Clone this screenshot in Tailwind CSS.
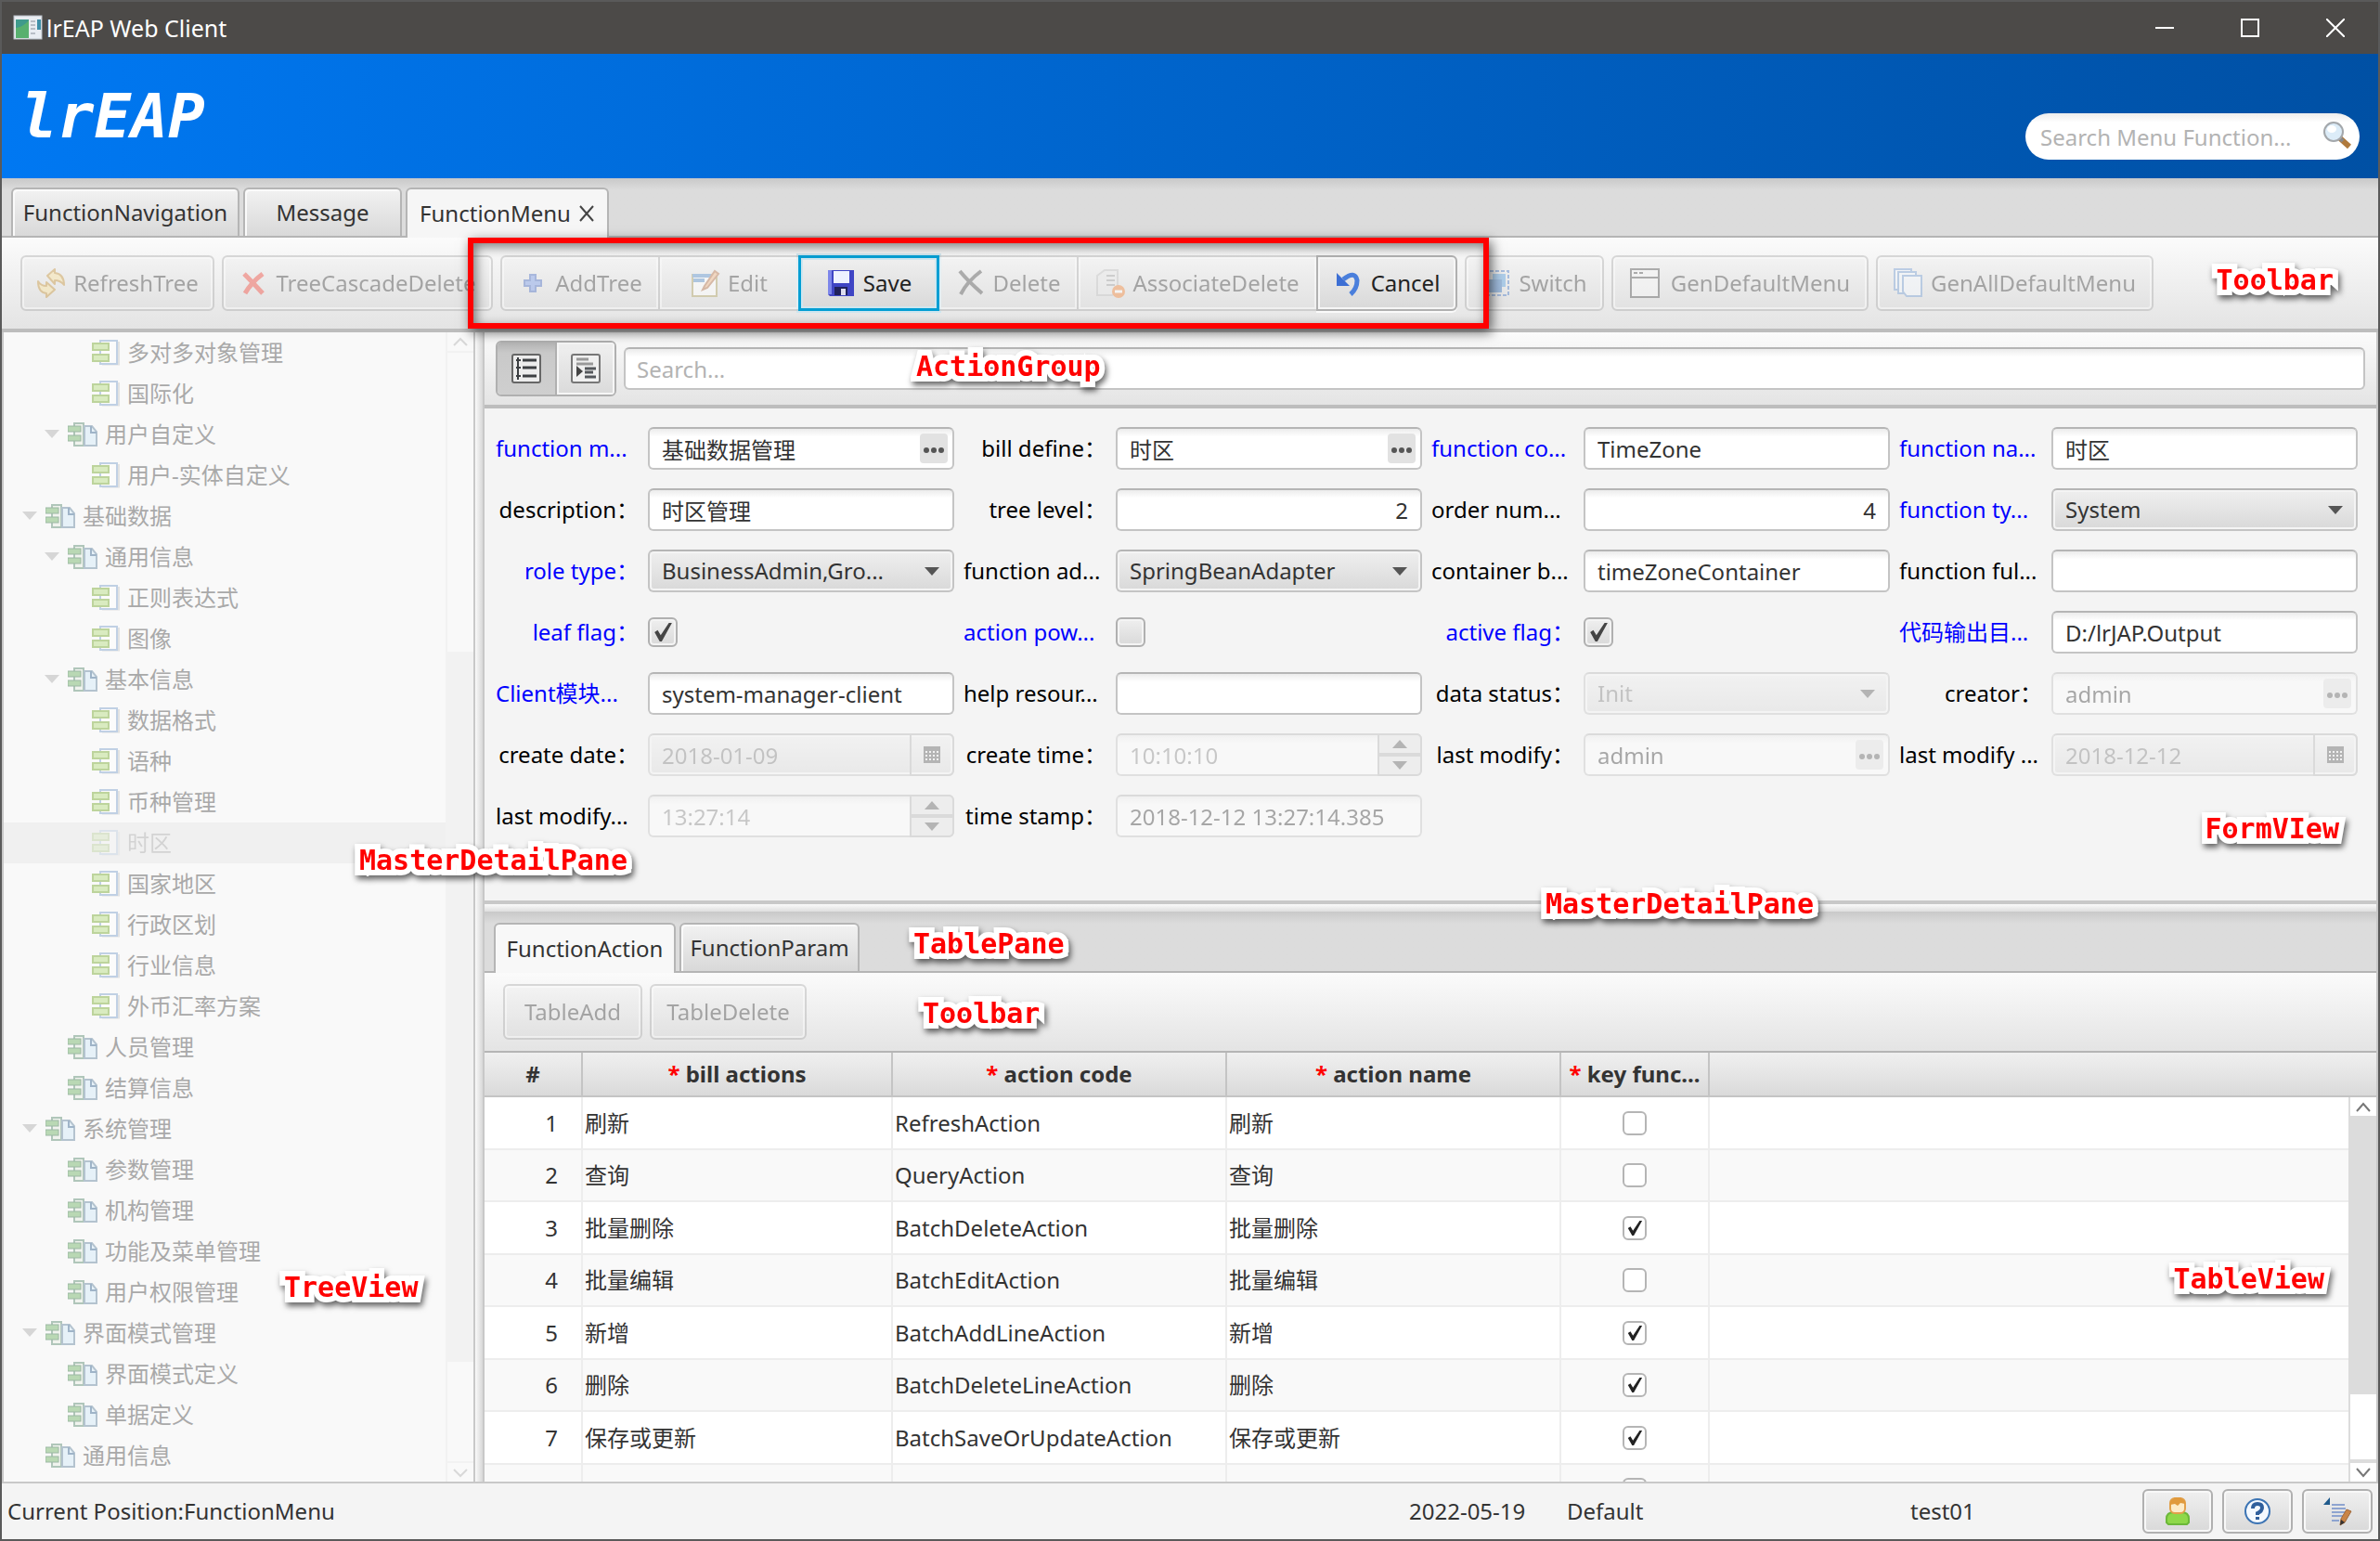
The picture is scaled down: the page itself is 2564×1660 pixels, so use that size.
<!DOCTYPE html>
<html lang="zh">
  <head>
    <meta charset="UTF-8" />
    <meta name="viewport" content="width=device-width, initial-scale=1.0" />
    <title>lrEAP Web Client</title>
    <script src="https://cdn.jsdelivr.net/npm/@tailwindcss/browser@4"></script>
  </head>
  <body
    class="h-screen flex flex-col overflow-hidden border-2 border-[#5a5a5a] bg-[#f4f4f4] text-[#333] text-[24px] leading-8 font-['Noto_Sans','Noto_Sans_CJK_SC',sans-serif]"
  >
    <!-- Shared icons -->
    <svg class="hidden">
      <symbol id="i-leaf" viewBox="0 0 30 30">
        <path d="M11 27h18V3" fill="none" stroke="#e2e2e2" stroke-width="3" />
        <rect x="9" y="2" width="18" height="25" fill="#fbfbfb" stroke="#c0d0e4" stroke-width="2" />
        <rect x="1" y="5" width="17" height="7" fill="#d9ebc0" stroke="#bdd49c" stroke-width="2" />
        <rect x="1" y="17" width="17" height="7" fill="#d9ebc0" stroke="#bdd49c" stroke-width="2" />
      </symbol>
      <symbol id="i-folder" viewBox="0 0 32 28">
        <rect x="7" y="2" width="10" height="24" fill="#f0f3ee" stroke="#b0c6ba" stroke-width="2" />
        <rect x="0" y="5" width="14" height="6" fill="#b9d8b4" stroke="#9cb8a4" />
        <rect x="0" y="15" width="14" height="6" fill="#b9d8b4" stroke="#9cb8a4" />
        <path d="M18 5h8l5 6v15H18z" fill="#e6f1f8" stroke="#b4c3cf" stroke-width="2" />
        <path d="M25 5v7h6" fill="none" stroke="#9fb4c8" stroke-width="2" />
      </symbol>
      <symbol id="i-check" viewBox="0 0 20 20">
        <path d="M2 10l3-2 3 5 8-12h3L9 19H7z" fill="currentColor" />
      </symbol>
      <symbol id="i-down" viewBox="0 0 16 10">
        <path d="M0 0h16L8 9z" fill="currentColor" />
      </symbol>
      <symbol id="i-calendar" viewBox="0 0 20 20">
        <path d="M1 1h18v18H1z" fill="#555" />
        <path d="M3 7h14M3 11h14M3 15h14" stroke="#eee" stroke-width="2" stroke-dasharray="2 2" />
      </symbol>
    </svg>

    <!-- Title bar -->
    <header class="h-14 shrink-0 flex items-center bg-[#4c4a48] text-white text-[25px] pl-3">
      <svg class="w-8 h-7 mr-1" viewBox="0 0 32 28">
        <rect x="1" y="1" width="30" height="25" fill="#e9edf2" stroke="#b9c0c8" />
        <rect x="3" y="5" width="14" height="20" fill="#3f9a8c" />
        <path d="M3 25V14q8-1 14-8v19z" fill="#58b06f" />
        <path d="M19 7h5M19 11h5M19 15h5M19 20h5" stroke="#b8bec6" stroke-width="2" />
        <rect x="26" y="5" width="4" height="11" fill="#3f8fa8" />
      </svg>
      <span class="flex-1">lrEAP Web Client</span>
      <button class="w-[92px] h-full flex items-center justify-center" aria-label="Minimize">
        <span class="w-5 h-[2px] bg-white"></span>
      </button>
      <button class="w-[92px] h-full flex items-center justify-center" aria-label="Maximize">
        <span class="w-5 h-5 border-2 border-white"></span>
      </button>
      <button class="w-[92px] h-full flex items-center justify-center" aria-label="Close">
        <svg class="w-5 h-5" viewBox="0 0 20 20"><path d="M0 0l20 20M20 0L0 20" stroke="#fff" stroke-width="2" /></svg>
      </button>
    </header>

    <!-- Banner -->
    <div class="h-[134px] shrink-0 flex items-end justify-between pl-5 pr-5 pb-5 bg-linear-to-r from-[#0078f2] to-[#0050a4]">
      <h1 class="text-white text-[66px] leading-[92px] italic font-bold font-['DejaVu_Sans_Mono',monospace]">lrEAP</h1>
      <div class="relative w-[360px]">
        <input
          type="text"
          aria-label="Search menu function"
          placeholder="Search Menu Function..."
          class="block w-full h-[50px] rounded-full bg-linear-to-b from-[#ececec] to-white to-20% pl-4 pr-14 placeholder:text-[#b3b3b3] outline-none"
        />
        <svg class="absolute right-2 top-2 w-8 h-8" viewBox="0 0 32 32">
          <path d="M19 19l10 9" stroke="#b07a3c" stroke-width="6" />
          <path d="M18 18l4 4" stroke="#888" stroke-width="4" />
          <circle cx="12" cy="12" r="10" fill="#dcecf8" stroke="#a3a7ab" stroke-width="2" />
          <ellipse cx="10" cy="9" rx="5" ry="4" fill="#fff" />
        </svg>
      </div>
    </div>

    <!-- Main tabs -->
    <nav class="h-16 shrink-0 flex items-end gap-1 pl-[10px] border-b-2 border-[#b5b5b5] bg-linear-to-b from-[#c9c9c9] via-[#dcdcdc] via-20% to-[#dcdcdc]">
      <button class="w-[246px] h-[52px] rounded-t-md border-2 border-b-0 border-[#b5b5b5] bg-linear-to-b from-[#f2f2f2] to-[#d9d9d9] shadow-[inset_2px_2px_0_#fafafa]">FunctionNavigation</button>
      <button class="w-[171px] h-[52px] rounded-t-md border-2 border-b-0 border-[#b5b5b5] bg-linear-to-b from-[#f2f2f2] to-[#d9d9d9] shadow-[inset_2px_2px_0_#fafafa]">Message</button>
      <button class="w-[219px] h-[54px] -mb-[2px] rounded-t-md border-2 border-b-0 border-[#b5b5b5] bg-[#f6f6f6] flex items-center justify-center gap-2">
        FunctionMenu
        <svg class="w-[18px] h-[18px]" viewBox="0 0 18 18"><path d="M2 1l14 16M16 1L2 17" stroke="#444" stroke-width="2" /></svg>
      </button>
    </nav>

    <!-- Toolbar -->
    <div class="relative h-[102px] shrink-0 flex items-center gap-2 pl-5 border-b-4 border-[#bdbdbd] bg-linear-to-b from-[#fbfbfb] to-[#e4e4e4]">
      <button disabled class="opacity-40 w-[209px] h-[60px] rounded-md border-2 border-[#a8a8a8] bg-linear-to-b from-[#efefef] to-[#d9d9d9] shadow-[inset_0_0_0_2px_#fafafa] flex items-center justify-center gap-2">
        <svg class="w-8 h-8" viewBox="0 0 32 32" fill="#f7dd92" stroke="#c08a2a" stroke-width="2" stroke-linejoin="round">
          <path d="M12 8l8-7v4q10 1 10 13-4-5-10-5v4z" />
          <path d="M20 23l-9 8v-4Q2 26 2 14q3 5 9 5v-4z" />
        </svg>
        RefreshTree
      </button>
      <button disabled class="opacity-40 w-[292px] h-[60px] rounded-md border-2 border-[#a8a8a8] bg-linear-to-b from-[#efefef] to-[#d9d9d9] shadow-[inset_0_0_0_2px_#fafafa] flex items-center justify-center gap-2">
        <svg class="w-8 h-8" viewBox="0 0 32 32"><path d="M6 6q8 8 20 21M26 6Q14 15 7 27" fill="none" stroke="#ee3a2c" stroke-width="5" /></svg>
        TreeCascadeDelete
      </button>
      <div class="relative flex w-[1031px] h-[60px]">
        <button disabled class="opacity-40 w-[172px] rounded-l-md border-2 border-[#a8a8a8] bg-linear-to-b from-[#efefef] to-[#d9d9d9] shadow-[inset_0_0_0_2px_#fafafa] flex items-center justify-center gap-2">
          <svg class="w-8 h-8" viewBox="0 0 32 32"><path d="M13 7h6v6h6v6h-6v6h-6v-6H7v-6h6z" fill="#6e92e6" stroke="#3d62bd" stroke-width="2" /></svg>
          AddTree
        </button>
        <button disabled class="opacity-40 w-[149px] border-y-2 border-[#a8a8a8] bg-linear-to-b from-[#efefef] to-[#d9d9d9] shadow-[inset_0_0_0_2px_#fafafa] flex items-center justify-center gap-2">
          <svg class="w-8 h-8" viewBox="0 0 32 32">
            <rect x="2" y="7" width="26" height="23" fill="#fff" stroke="#a99a55" stroke-width="2" />
            <path d="M2 8h20M3 13h12" stroke="#4d88c8" stroke-width="4" />
            <path d="M15 19L26 3l4 3-12 15-5 2z" fill="#f0b07a" stroke="#b0673a" stroke-width="2" />
          </svg>
          Edit
        </button>
        <button class="w-[152px] border-[3px] border-[#039ed3] bg-linear-to-b from-[#efefef] to-[#d9d9d9] shadow-[0_0_0_2px_#cfe6ef,inset_0_0_0_2px_#cfe6ef] flex items-center justify-center gap-2 text-[#222]">
          <svg class="w-8 h-8" viewBox="0 0 32 32">
            <path d="M2 2h28v28H4l-2-2z" fill="#3f45c4" />
            <path d="M2 2h4v26H2z" fill="#7d86ea" />
            <rect x="8" y="3" width="17" height="13" fill="#eef2ff" />
            <rect x="9" y="20" width="14" height="9" fill="#20225c" />
            <rect x="16" y="22" width="5" height="7" fill="#dde" />
          </svg>
          Save
        </button>
        <button disabled class="opacity-40 w-[150px] border-y-2 border-r-2 border-[#a8a8a8] bg-linear-to-b from-[#efefef] to-[#d9d9d9] shadow-[inset_0_0_0_2px_#fafafa] flex items-center justify-center gap-2">
          <svg class="w-8 h-8" viewBox="0 0 32 32"><path d="M4 3q8 10 24 24M27 3Q12 14 5 28" fill="none" stroke="#444" stroke-width="4" /></svg>
          Delete
        </button>
        <button disabled class="opacity-40 w-[256px] border-y-2 border-[#a8a8a8] bg-linear-to-b from-[#efefef] to-[#d9d9d9] shadow-[inset_0_0_0_2px_#fafafa] flex items-center justify-center gap-2">
          <svg class="w-8 h-8" viewBox="0 0 32 32">
            <path d="M2 8l8-6h14v24l-6 3H2z" fill="#e4e4e4" stroke="#bbb" stroke-width="2" />
            <path d="M12 8h9M12 13h9M12 18h9" stroke="#999" stroke-width="2" />
            <circle cx="25" cy="25" r="7" fill="#f07a26" />
            <path d="M21 25h8" stroke="#fff" stroke-width="3" />
          </svg>
          AssociateDelete
        </button>
        <button class="w-[152px] rounded-r-md border-2 border-[#b0b0b0] bg-linear-to-b from-[#efefef] to-[#d9d9d9] shadow-[inset_0_0_0_2px_#f6f6f6,0_2px_0_#fafafa] flex items-center justify-center gap-2 text-[#222]">
          <svg class="w-8 h-8" viewBox="0 0 32 32">
            <path d="M10 12Q23 2 25 13q0 9-7 15" fill="none" stroke="#4a7fdc" stroke-width="5" />
            <path d="M3 5v14h14z" fill="#3d6fd4" />
          </svg>
          Cancel
        </button>
        <!-- Marks the action group -->
        <div class="absolute -left-[35px] -right-[34px] -top-[19px] h-[98px] border-[6px] border-[#f00] shadow-[3px_4px_12px_rgba(0,0,0,.6),inset_3px_4px_12px_rgba(0,0,0,.5)] z-10 pointer-events-none"></div>
      </div>
      <button disabled class="opacity-40 w-[150px] h-[60px] rounded-md border-2 border-[#a8a8a8] bg-linear-to-b from-[#efefef] to-[#d9d9d9] shadow-[inset_0_0_0_2px_#fafafa] flex items-center justify-center gap-2">
        <svg class="w-8 h-8" viewBox="0 0 32 32">
          <rect x="3" y="3" width="26" height="26" fill="none" stroke="#3b6fc0" stroke-width="2" stroke-dasharray="4 2" />
          <rect x="12" y="6" width="14" height="14" fill="#4c9ade" />
          <rect x="6" y="12" width="16" height="14" fill="#2b6fc0" />
        </svg>
        Switch
      </button>
      <button disabled class="opacity-40 w-[277px] h-[60px] rounded-md border-2 border-[#a8a8a8] bg-linear-to-b from-[#efefef] to-[#d9d9d9] shadow-[inset_0_0_0_2px_#fafafa] flex items-center justify-center gap-3">
        <svg class="w-8 h-8" viewBox="0 0 32 32">
          <rect x="1" y="1" width="30" height="30" fill="#f4f4f4" stroke="#444" stroke-width="2" />
          <path d="M1 10h30M4 5h4M10 5h4" stroke="#444" stroke-width="2" />
        </svg>
        GenDefaultMenu
      </button>
      <button disabled class="opacity-40 w-[299px] h-[60px] rounded-md border-2 border-[#a8a8a8] bg-linear-to-b from-[#efefef] to-[#d9d9d9] shadow-[inset_0_0_0_2px_#fafafa] flex items-center justify-center gap-2">
        <svg class="w-8 h-8" viewBox="0 0 32 32" fill="#f2f7fd" stroke="#6b97cf" stroke-width="2">
          <rect x="1" y="1" width="18" height="22" />
          <rect x="5" y="4" width="19" height="23" />
          <path d="M10 8h20v22H14l-4-5z" />
        </svg>
        GenAllDefaultMenu
      </button>
      <span class="absolute right-12 top-7 text-[#f00] text-[30px] leading-9 font-bold font-['DejaVu_Sans_Mono',monospace] [-webkit-text-stroke:12px_#fff] [paint-order:stroke] drop-shadow-[2px_4px_3px_rgba(0,0,0,.6)]">Toolbar</span>
    </div>

    <main class="relative flex-1 min-h-0 flex border-b-2 border-[#c8c8c8]">
      <!-- Function tree -->
      <aside class="relative w-[510px] shrink-0 flex border-x-2 border-[#c8c8c8] bg-[#f9f9f9] overflow-hidden">
        <ul id="tree" class="flex-1 text-[#a9a9a9]"></ul>
        <div class="w-[30px] border-l-2 border-[#f2f2f2] flex flex-col items-center text-[#d8d8d8]">
          <svg class="w-4 h-5" viewBox="0 0 16 20" fill="none" stroke="currentColor" stroke-width="2"><path d="M1 14l7-7 7 7" /></svg>
          <div class="w-full flex-1 border-y-2 border-[#f2f2f2] flex flex-col">
            <div class="h-[27%]"></div>
            <div class="h-[64%] bg-[#f2f2f2]"></div>
          </div>
          <svg class="w-4 h-5" viewBox="0 0 16 20" fill="none" stroke="currentColor" stroke-width="2"><path d="M1 7l7 7 7-7" /></svg>
        </div>
        <span class="absolute left-[302px] bottom-[191px] text-[#f00] text-[30px] leading-9 font-bold font-['DejaVu_Sans_Mono',monospace] [-webkit-text-stroke:12px_#fff] [paint-order:stroke] drop-shadow-[2px_4px_3px_rgba(0,0,0,.6)]">TreeView</span>
      </aside>
      <div class="w-2 shrink-0 bg-linear-to-r from-[#fafafa] to-[#d8d8d8]"></div>
      <span class="absolute z-10 left-[385px] top-[551px] text-[#f00] text-[30px] leading-9 font-bold font-['DejaVu_Sans_Mono',monospace] [-webkit-text-stroke:12px_#fff] [paint-order:stroke] drop-shadow-[2px_4px_3px_rgba(0,0,0,.6)]">MasterDetailPane</span>

      <section class="flex-1 min-w-0 flex flex-col border-x-2 border-[#c8c8c8]">
        <!-- Form search -->
        <div class="relative h-[82px] shrink-0 flex items-center gap-2 px-3 border-b-4 border-[#bdbdbd] bg-linear-to-b from-[#fbfbfb] to-[#e4e4e4]">
          <div class="flex h-[60px] w-[130px] rounded-md border-2 border-[#b0b0b0] overflow-hidden">
            <button aria-label="List view" class="flex-1 flex items-center justify-center border-r-2 border-[#b0b0b0] bg-linear-to-b from-[#b4b4b4] via-[#c9c9c9] via-20% to-[#cfcfcf]">
              <svg class="w-8 h-8" viewBox="0 0 32 32" fill="none" stroke="#3c3f42" stroke-width="2">
                <rect x="1" y="1" width="30" height="30" rx="2" fill="#ececec" stroke="#666" />
                <path d="M7 4v24M5 7h5M5 15h5M5 24h5" />
                <path d="M12 7h15M12 15h15M12 24h15" stroke-width="3" />
              </svg>
            </button>
            <button aria-label="Detail view" class="flex-1 flex items-center justify-center bg-linear-to-b from-[#f0f0f0] to-[#dadada] shadow-[inset_0_0_0_2px_#f6f6f6]">
              <svg class="w-8 h-8" viewBox="0 0 32 32" fill="none" stroke="#55585c" stroke-width="3">
                <rect x="1" y="1" width="30" height="30" rx="2" fill="#f0f0f0" stroke="#777" stroke-width="2" />
                <path d="M6 6h13M6 11h18" stroke="#999" />
                <path d="M15 16h12M15 20h9M15 25h12" />
                <path d="M6 13l7 6-7 6z" fill="#444" stroke="none" />
              </svg>
            </button>
          </div>
          <input
            type="text"
            aria-label="Search"
            placeholder="Search..."
            class="flex-1 h-[46px] rounded-md border-2 border-[#c4c4c4] border-t-[#b5b5b5] bg-linear-to-b from-[#ececec] to-white to-20% px-3 placeholder:text-[#b3b3b3] outline-none"
          />
          <span class="absolute left-[465px] top-[19px] text-[#f00] text-[30px] leading-9 font-bold font-['DejaVu_Sans_Mono',monospace] [-webkit-text-stroke:12px_#fff] [paint-order:stroke] drop-shadow-[2px_4px_3px_rgba(0,0,0,.6)]">ActionGroup</span>
        </div>

        <!-- Form -->
        <div class="relative shrink-0 pt-5 pb-[68px] pl-3 pr-5 border-b-4 border-[#c8c8c8]">
          <form id="form" class="grid grid-cols-[154px_1fr_154px_1fr_154px_1fr_154px_1fr] gap-x-[10px] gap-y-5 items-center"></form>
          <span class="absolute right-10 bottom-[59px] text-[#f00] text-[30px] leading-9 font-bold font-['DejaVu_Sans_Mono',monospace] [-webkit-text-stroke:12px_#fff] [paint-order:stroke] drop-shadow-[2px_4px_3px_rgba(0,0,0,.6)]">FormVIew</span>
        </div>
        <div class="relative h-2 shrink-0 bg-linear-to-b from-[#fafafa] to-[#dedede]">
          <span class="absolute z-10 left-[1143px] -top-[18px] text-[#f00] text-[30px] leading-9 font-bold font-['DejaVu_Sans_Mono',monospace] [-webkit-text-stroke:12px_#fff] [paint-order:stroke] drop-shadow-[2px_4px_3px_rgba(0,0,0,.6)]">MasterDetailPane</span>
        </div>

        <!-- Detail tabs -->
        <nav class="relative h-[66px] shrink-0 flex items-end gap-1 pl-[10px] border-b-2 border-[#b5b5b5] bg-linear-to-b from-[#c9c9c9] via-[#dcdcdc] via-20% to-[#dcdcdc]">
          <button class="w-[196px] h-[54px] -mb-[2px] rounded-t-md border-2 border-b-0 border-[#b5b5b5] bg-[#f8f8f8]">FunctionAction</button>
          <button class="w-[194px] h-[52px] rounded-t-md border-2 border-b-0 border-[#b5b5b5] bg-linear-to-b from-[#f2f2f2] to-[#d9d9d9] shadow-[inset_2px_2px_0_#fafafa]">FunctionParam</button>
          <span class="absolute left-[462px] top-[17px] text-[#f00] text-[30px] leading-9 font-bold font-['DejaVu_Sans_Mono',monospace] [-webkit-text-stroke:12px_#fff] [paint-order:stroke] drop-shadow-[2px_4px_3px_rgba(0,0,0,.6)]">TablePane</span>
        </nav>
        <div class="relative h-[86px] shrink-0 flex items-center gap-2 pl-5 border-b-2 border-[#b5b5b5] bg-linear-to-b from-[#fbfbfb] to-[#e4e4e4]">
          <button disabled class="opacity-40 w-[150px] h-[60px] rounded-md border-2 border-[#a8a8a8] bg-linear-to-b from-[#efefef] to-[#d9d9d9] shadow-[inset_0_0_0_2px_#fafafa]">TableAdd</button>
          <button disabled class="opacity-40 w-[169px] h-[60px] rounded-md border-2 border-[#a8a8a8] bg-linear-to-b from-[#efefef] to-[#d9d9d9] shadow-[inset_0_0_0_2px_#fafafa]">TableDelete</button>
          <span class="absolute left-[472px] top-[26px] text-[#f00] text-[30px] leading-9 font-bold font-['DejaVu_Sans_Mono',monospace] [-webkit-text-stroke:12px_#fff] [paint-order:stroke] drop-shadow-[2px_4px_3px_rgba(0,0,0,.6)]">Toolbar</span>
        </div>

        <!-- Detail table -->
        <div class="relative flex-1 min-h-0 overflow-hidden bg-white">
          <table class="w-full table-fixed border-separate border-spacing-0">
            <colgroup>
              <col class="w-[106px]" />
              <col class="w-[334px]" />
              <col class="w-[360px]" />
              <col class="w-[360px]" />
              <col class="w-[160px]" />
              <col />
            </colgroup>
            <thead>
              <tr class="h-12 bg-linear-to-b from-[#f0f0f0] to-[#d9d9d9]">
                <th class="border-r-2 border-b-2 border-[#c4c4c4]">#</th>
                <th class="border-r-2 border-b-2 border-[#c4c4c4]"><span class="text-[#f00]">*</span> bill actions</th>
                <th class="border-r-2 border-b-2 border-[#c4c4c4]"><span class="text-[#f00]">*</span> action code</th>
                <th class="border-r-2 border-b-2 border-[#c4c4c4]"><span class="text-[#f00]">*</span> action name</th>
                <th class="border-r-2 border-b-2 border-[#c4c4c4] whitespace-nowrap"><span class="text-[#f00]">*</span> key func...</th>
                <th class="border-b-2 border-[#c4c4c4]"></th>
              </tr>
            </thead>
            <tbody id="rows"></tbody>
          </table>
          <div class="absolute top-12 right-0 bottom-0 w-[30px] bg-white border-l-2 border-[#dcdcdc] flex flex-col items-center text-[#777]">
            <svg class="w-4 h-5" viewBox="0 0 16 20" fill="none" stroke="currentColor" stroke-width="2"><path d="M1 15l7-8 7 8" /></svg>
            <div class="w-full flex-1 border-b-4 border-[#dcdcdc]">
              <div class="h-[81%] bg-[#dcdcdc]"></div>
            </div>
            <svg class="w-4 h-5" viewBox="0 0 16 20" fill="none" stroke="currentColor" stroke-width="2"><path d="M1 6l7 8 7-8" /></svg>
          </div>
          <span class="absolute right-[56px] top-[226px] text-[#f00] text-[30px] leading-9 font-bold font-['DejaVu_Sans_Mono',monospace] [-webkit-text-stroke:12px_#fff] [paint-order:stroke] drop-shadow-[2px_4px_3px_rgba(0,0,0,.6)]">TableView</span>
        </div>
      </section>
    </main>

    <!-- Status bar -->
    <footer class="h-[60px] shrink-0 flex items-center px-[6px]">
      <span class="flex-1">Current Position:FunctionMenu</span>
      <span class="w-[170px]">2022-05-19</span>
      <span class="w-[370px]">Default</span>
      <span class="w-[250px]">test01</span>
      <div class="flex gap-[10px]">
        <button aria-label="User" class="w-[76px] h-12 rounded-md border-2 border-[#b0b0b0] bg-linear-to-b from-[#f0f0f0] to-[#d9d9d9] shadow-[inset_0_0_0_2px_#f8f8f8] flex items-center justify-center">
          <svg class="w-8 h-8" viewBox="0 0 32 32">
            <path d="M4 28V24q0-7 8-7h8q8 0 8 7v4l-2 2H6z" fill="#8fd84a" stroke="#6cb83a" stroke-width="2" />
            <rect x="8" y="2" width="16" height="16" rx="5" fill="#fdebc8" stroke="#e2a04a" stroke-width="2" />
            <path d="M8 9V5l5-4h6l5 4v3l-5-1-3 3-3-2z" fill="#e09a3e" />
          </svg>
        </button>
        <button aria-label="Help" class="w-[76px] h-12 rounded-md border-2 border-[#b0b0b0] bg-linear-to-b from-[#f0f0f0] to-[#d9d9d9] shadow-[inset_0_0_0_2px_#f8f8f8] flex items-center justify-center">
          <svg class="w-8 h-8" viewBox="0 0 32 32" fill="none" stroke="#3c74b4">
            <circle cx="16" cy="16" r="13" fill="#f4f9ff" stroke-width="2" />
            <path d="M11 13q0-5 5-5t5 4-5 6v2M16 22v3" stroke="#2f5f9c" stroke-width="4" />
          </svg>
        </button>
        <button aria-label="Log" class="w-[76px] h-12 rounded-md border-2 border-[#b0b0b0] bg-linear-to-b from-[#f0f0f0] to-[#d9d9d9] shadow-[inset_0_0_0_2px_#f8f8f8] flex items-center justify-center">
          <svg class="w-8 h-8" viewBox="0 0 32 32" fill="none">
            <path d="M1 9l7-8v8z" fill="#1f5a8c" />
            <path d="M10 9h14M10 13h15M10 17h14M10 21h12M10 26h8" stroke="#8ea4d0" stroke-width="2" />
            <path d="M20 24l6-10 5 2-7 12-5 3z" fill="#c98446" stroke="#a0683a" />
            <path d="M20 25l4 3-5 3z" fill="#333" />
          </svg>
        </button>
      </div>
    </footer>

    <script>
      // [level, label, open]; level 3 = leaf
      const tree = [
        [3, "多对多对象管理"], [3, "国际化"], [2, "用户自定义", true], [3, "用户-实体自定义"],
        [1, "基础数据", true], [2, "通用信息", true], [3, "正则表达式"], [3, "图像"],
        [2, "基本信息", true], [3, "数据格式"], [3, "语种"], [3, "币种管理"], [3, "时区"],
        [3, "国家地区"], [3, "行政区划"], [3, "行业信息"], [3, "外币汇率方案"],
        [2, "人员管理"], [2, "结算信息"], [1, "系统管理", true], [2, "参数管理"],
        [2, "机构管理"], [2, "功能及菜单管理"], [2, "用户权限管理"],
        [1, "界面模式管理", true], [2, "界面模式定义"], [2, "单据定义"], [1, "通用信息"],
      ];
      const indent = { 1: "pl-5", 2: "pl-11", 3: "pl-[95px]" };
      document.getElementById("tree").innerHTML = tree
        .map(([level, label, open]) => {
          const selected = label === "时区";
          const icon =
            level === 3
              ? `<svg class="w-[30px] h-[30px]"><use href="#i-leaf" /></svg>`
              : `<svg class="w-4 h-[10px] mr-[9px] text-[#d6d6d6] ${open ? "" : "invisible"}"><use href="#i-down" /></svg>
                 <svg class="w-8 h-7"><use href="#i-folder" /></svg>`;
          return `<li class="h-11 flex items-center ${indent[level]} ${selected ? "bg-[#f0f0f0]" : ""}">
            <span class="flex items-center ${selected ? "opacity-40" : ""}">${icon}<span class="ml-2">${label}</span></span>
          </li>`;
        })
        .join("");

      // [label, type, value, flags]: r = required (blue), d = disabled, o = off
      const fields = [
        ["function m...", "ref", "基础数据管理", "r"], ["bill define：", "ref", "时区", ""],
        ["function co...", "text", "TimeZone", "r"], ["function na...", "text", "时区", "r"],
        ["description：", "text", "时区管理", ""], ["tree level：", "num", "2", ""],
        ["order num...", "num", "4", ""], ["function ty...", "select", "System", "r"],
        ["role type：", "select", "BusinessAdmin,Gro...", "r"], ["function ad...", "select", "SpringBeanAdapter", ""],
        ["container b...", "text", "timeZoneContainer", ""], ["function ful...", "text", "", ""],
        ["leaf flag：", "check", "", "r"], ["action pow...", "check", "", "ro"],
        ["active flag：", "check", "", "r"], ["代码输出目...", "text", "D:/lrJAP.Output", "r"],
        ["Client模块...", "text", "system-manager-client", "r"], ["help resour...", "text", "", ""],
        ["data status：", "select", "Init", "d"], ["creator：", "ref", "admin", "d"],
        ["create date：", "date", "2018-01-09", "d"], ["create time：", "time", "10:10:10", "d"],
        ["last modify：", "ref", "admin", "d"], ["last modify ...", "date", "2018-12-12", "d"],
        ["last modify...", "time", "13:27:14", "d"], ["time stamp：", "text", "2018-12-12 13:27:14.385", "d"],
      ];
      const box = "block w-full h-[46px] rounded-md border-2 border-[#c4c4c4] border-t-[#b5b5b5] px-[13px] outline-none";
      const white = "bg-linear-to-b from-[#ececec] to-white to-20%";
      const grey = "bg-linear-to-b from-[#efefef] to-[#d9d9d9] shadow-[inset_0_0_0_2px_#f4f4f4]";
      const dots = `<button type="button" aria-label="Choose" class="absolute right-[7px] top-[7px] w-[30px] h-8 rounded-sm bg-[#e2e2e2] flex items-center justify-center gap-[2px]"><i class="w-[6px] h-[6px] rounded-full bg-[#555] mt-1"></i><i class="w-[6px] h-[6px] rounded-full bg-[#555] mt-1"></i><i class="w-[6px] h-[6px] rounded-full bg-[#555] mt-1"></i></button>`;
      const calendar = `<span class="absolute right-0 top-0 w-12 h-[46px] border-2 border-[#b5b5b5] rounded-r-md flex items-center justify-center"><svg class="w-5 h-5"><use href="#i-calendar" /></svg></span>`;
      const spinner = `<span class="absolute right-0 top-0 w-12 h-[46px] border-2 border-[#b5b5b5] rounded-r-md bg-[#e4e4e4] flex flex-col items-center justify-between py-1 text-[#555]"><svg class="w-4 h-[10px] rotate-180"><use href="#i-down" /></svg><i class="w-full h-1 bg-[#b5b5b5]"></i><svg class="w-4 h-[10px]"><use href="#i-down" /></svg></span>`;

      function control(type, value, flags, id) {
        const off = flags.includes("d") ? "disabled" : "";
        if (type === "check") {
          return `<label class="relative block w-8 h-8">
            <input id="${id}" type="checkbox" ${flags.includes("o") ? "" : "checked"} class="peer block w-8 h-8 appearance-none rounded-md border-2 border-[#b0b0b0] ${grey}" />
            <svg class="hidden peer-checked:block absolute left-[5px] top-1 w-[22px] h-6 text-[#444] pointer-events-none"><use href="#i-check" /></svg>
          </label>`;
        }
        if (type === "select") {
          return `<select id="${id}" ${off} class="${box} appearance-none opacity-100 ${off ? "text-[#333]/60" : ""} ${grey}"><option>${value}</option></select>
            <svg class="absolute right-4 top-[19px] w-4 h-[10px] text-[#555] pointer-events-none"><use href="#i-down" /></svg>`;
        }
        const extra = { ref: dots, date: calendar, time: spinner }[type] || "";
        return `<input id="${id}" type="text" value="${value}" ${off} class="${box} ${type === "date" ? grey : white} ${type === "num" ? "text-right" : ""} ${["date", "time"].includes(type) ? "text-[#333]/60" : ""}" />${extra}`;
      }

      document.getElementById("form").innerHTML = fields
        .map(([label, type, value, flags], i) => {
          const cut = label.endsWith("...");
          return `<label for="f${i}" class="whitespace-nowrap ${cut ? "text-left" : "text-right"} ${flags.includes("r") ? "text-[#00f]" : "text-black"}">${label}</label>
            <div class="relative h-[46px] flex flex-col justify-center ${flags.includes("d") ? "opacity-40" : ""}">${control(type, value, flags, "f" + i)}</div>`;
        })
        .join("");

      const actions = [
        ["1", "刷新", "RefreshAction", false], ["2", "查询", "QueryAction", false],
        ["3", "批量删除", "BatchDeleteAction", true], ["4", "批量编辑", "BatchEditAction", false],
        ["5", "新增", "BatchAddLineAction", true], ["6", "删除", "BatchDeleteLineAction", true],
        ["7", "保存或更新", "BatchSaveOrUpdateAction", true], ["", "", "", false],
      ];
      const cell = "border-r-2 border-b-2 border-[#ededed] pl-[2px]";
      document.getElementById("rows").innerHTML = actions
        .map(
          ([no, name, code, key]) => `<tr class="h-14 odd:h-[57px] even:bg-[#f9f9f9]">
            <td class="border-r-2 border-b-2 border-[#ededed] text-right pr-[25px]">${no}</td>
            <td class="${cell}">${name}</td>
            <td class="${cell}">${code}</td>
            <td class="${cell}">${name}</td>
            <td class="border-r-2 border-b-2 border-[#ededed]">
              <label class="relative block w-[26px] h-[26px] mx-auto">
                <input type="checkbox" aria-label="key function" ${key ? "checked" : ""} class="peer block w-[26px] h-[26px] appearance-none rounded-md border-2 border-[#b5b5b5] bg-white" />
                <svg class="hidden peer-checked:block absolute left-1 top-1 w-[18px] h-[18px] text-[#222] pointer-events-none"><use href="#i-check" /></svg>
              </label>
            </td>
            <td class="border-b-2 border-[#ededed]"></td>
          </tr>`
        )
        .join("");
    </script>
  </body>
</html>
